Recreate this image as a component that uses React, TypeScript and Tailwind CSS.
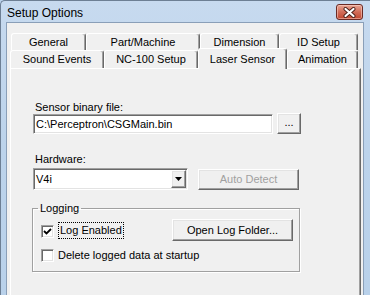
import React from "react";

const raised =
  "border border-t-white border-l-white border-r-[#696969] border-b-[#696969] shadow-[inset_-1px_-1px_0_#a0a0a0,inset_1px_1px_0_#e3e3e3] bg-[#f0f0f0]";
const sunken =
  "border border-t-[#a0a0a0] border-l-[#a0a0a0] border-r-white border-b-white shadow-[inset_1px_1px_0_#696969,inset_-1px_-1px_0_#e3e3e3] bg-white";

function Tab({ label, w, h }: { label: string; w: string; h: string }) {
  return (
    <div
      className={`${w} ${h} shrink-0 flex items-center justify-center border-l border-t border-white border-r border-r-[#696969] shadow-[inset_-1px_0_0_#a0a0a0] rounded-t-[3px] bg-[#f0f0f0] whitespace-nowrap`}
    >
      {label}
    </div>
  );
}

function Check({ checked }: { checked?: boolean }) {
  return (
    <div className={`w-[13px] h-[13px] shrink-0 ${sunken} flex items-center justify-center`}>
      {checked && (
        <svg width="9" height="9" viewBox="0 0 9 9">
          <path d="M1 4 L3.5 6.5 L8 2" stroke="#000" strokeWidth="1.8" fill="none" />
        </svg>
      )}
    </div>
  );
}

export default function App() {
  return (
    <div className="w-[370px] h-[295px] overflow-hidden bg-[#b9d1ea] font-['Liberation_Sans',Arial,sans-serif] text-[11px] leading-[13px] text-black">
      <div className="w-[370px] h-[295px] flex flex-col border-l border-t border-[#6d7f94] rounded-tl-[5px] bg-gradient-to-b from-[#c7daef] via-[#bcd3eb] to-[#b9d1ea]">
        {/* title bar */}
        <div className="h-[21px] shrink-0 flex items-start justify-between pl-[6px] pr-[7px]">
          <div className="mt-[5px] text-[12px] leading-[14px]">Setup Options</div>
          <div className="mt-[3px] w-[27px] h-[16px] rounded-[3px] border border-[#6b2a24] bg-gradient-to-b from-[#e8a493] via-[#d16c58] to-[#c2462f] flex items-center justify-center shadow-[inset_0_0_0_1px_rgba(255,220,210,0.5)]">
            <svg width="13" height="11" viewBox="0 0 13 11">
              <path d="M2.5 2 L10.5 9 M10.5 2 L2.5 9" stroke="#4a1e18" strokeWidth="4" strokeLinecap="round" />
              <path d="M2.5 2 L10.5 9 M10.5 2 L2.5 9" stroke="#ffffff" strokeWidth="2.2" strokeLinecap="round" />
            </svg>
          </div>
        </div>
        {/* client */}
        <div className="flex-1 ml-[5px] mr-[6px] border-l border-t border-r border-[#8a9fb8] bg-[#f0f0f0] pt-[10px] pl-[3px] pr-[2px] flex flex-col">
          {/* tab row 1 */}
          <div className="flex ml-[1px] h-[17px]">
            <Tab label="General" w="w-[75px]" h="h-[17px]" />
            <Tab label="Part/Machine" w="w-[114px]" h="h-[17px]" />
            <Tab label="Dimension" w="w-[79px]" h="h-[17px]" />
            <Tab label="ID Setup" w="w-[79px]" h="h-[17px]" />
          </div>
          {/* tab row 2 */}
          <div className="flex items-end -mt-[2px] h-[20px] relative z-10">
            <Tab label="Sound Events" w="w-[94px]" h="h-[18px]" />
            <Tab label="NC-100 Setup" w="w-[94px]" h="h-[18px]" />
            <div className="w-[89px] h-[21px] -mb-[1px] shrink-0 flex items-start justify-center pt-[4px] border-l border-t border-white border-r border-r-[#696969] shadow-[inset_-1px_0_0_#a0a0a0] rounded-t-[3px] bg-[#f0f0f0] whitespace-nowrap">
              Laser Sensor
            </div>
            <Tab label="Animation" w="w-[71px]" h="h-[18px]" />
          </div>
          {/* panel */}
          <div className="flex-1 border-l border-t border-white border-r border-r-[#696969] shadow-[inset_-1px_0_0_#a0a0a0] pl-[22px] pt-[33px] flex flex-col items-start">
            <div className="ml-[2px] leading-[11px]">Sensor binary file:</div>
            <div className="flex items-end">
              <div className={`w-[240px] h-[20px] ${sunken} pl-[2px] flex items-center`}>
                C:\Perceptron\CSGMain.bin
              </div>
              <div className={`ml-[4px] w-[24px] h-[21px] ${raised} flex items-center justify-center pb-[2px]`}>
                ...
              </div>
            </div>
            <div className="ml-[2px] mt-[20px] leading-[11px]">Hardware:</div>
            <div className="flex items-start mt-[3px]">
              <div className={`w-[155px] h-[22px] ${sunken} flex items-stretch p-[1px]`}>
                <div className="flex-1 pl-[1px] flex items-center">V4i</div>
                <div className={`w-[15px] ${raised} flex items-center justify-center`}>
                  <svg width="7" height="4" viewBox="0 0 7 4">
                    <path d="M0 0 H7 L3.5 4 Z" fill="#000" />
                  </svg>
                </div>
              </div>
              <div className={`ml-[10px] mt-[1px] w-[101px] h-[21px] ${raised} flex items-center justify-center text-[#a0a0a0]`}>
                Auto Detect
              </div>
            </div>
            <fieldset className="-ml-[1px] mt-[13px] w-[268px] border border-[#a0a0a0] shadow-[inset_1px_1px_0_#ffffff,1px_1px_0_#ffffff] pl-[8px] pr-[6px] pb-[9px]">
              <legend className="-ml-[3px] px-[2px] leading-[11px]">Logging</legend>
              <div className="flex items-start mt-[5px] h-[22px]">
                <div className="mt-[6px]">
                  <Check checked />
                </div>
                <div className="ml-[4px] mt-[3px] border border-dotted border-black px-[1px] pt-[1px] pb-[1px]">
                  Log Enabled
                </div>
                <div className={`ml-auto w-[121px] h-[22px] ${raised} flex items-center justify-center`}>
                  Open Log Folder...
                </div>
              </div>
              <div className="flex items-center mt-[8px]">
                <Check />
                <div className="ml-[4px]">Delete logged data at startup</div>
              </div>
            </fieldset>
          </div>
        </div>
      </div>
    </div>
  );
}
